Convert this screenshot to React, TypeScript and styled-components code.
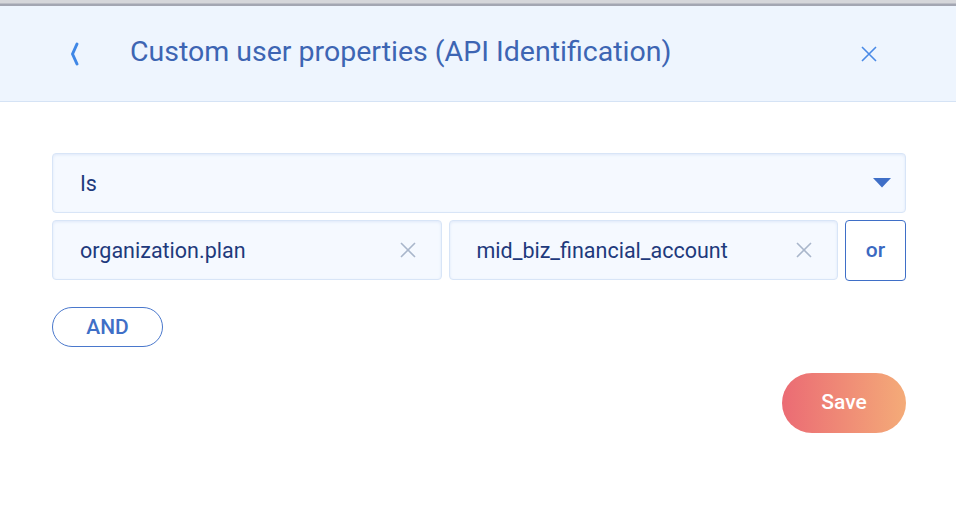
import styled, { createGlobalStyle } from 'styled-components';

const GlobalStyle = createGlobalStyle`
  html, body {
    margin: 0;
    padding: 0;
    background: #ffffff;
    font-family: Roboto, 'Liberation Sans', sans-serif;
  }
  * {
    box-sizing: border-box;
  }
`;

const Panel = styled.div`
  width: 956px;
  height: 528px;
  background: #fff;
  display: flex;
  flex-direction: column;
`;

const TopStrip = styled.div`
  height: 6px;
  flex-shrink: 0;
  background: linear-gradient(to bottom, #d5d6da 0, #d5d6da 3px, #a3a6b2 4px, #a3a6b2 6px);
`;

const Header = styled.div`
  height: 96px;
  flex-shrink: 0;
  background: #eef5fe;
  border-bottom: 1px solid #d5e3f5;
  display: flex;
  align-items: center;
  padding: 0 79px 0 68px;

  h1 {
    flex: 1;
    margin: 0 0 0 48px;
    font-size: 28.5px;
    font-weight: 400;
    color: #3d65b3;
    line-height: 1;
    padding-bottom: 2px;
  }
`;

const IconButton = styled.button`
  border: 0;
  background: none;
  padding: 0;
  display: flex;
  align-items: center;
  justify-content: center;
  cursor: pointer;
`;

const Body = styled.div`
  padding: 51px 50px 0 52px;
  display: flex;
  flex-direction: column;
`;

const Field = styled.div<{ $inRow?: boolean }>`
  height: 60px;
  flex: ${({ $inRow }) => ($inRow ? '1' : 'none')};
  background: #f5f9ff;
  border: 1px solid #d8e5f7;
  border-radius: 4px;
  box-shadow: inset 0 1px 3px rgba(120, 160, 220, 0.18);
  display: flex;
  align-items: center;
  padding: 0 ${({ $inRow }) => ($inRow ? '25px' : '14px')} 0 27px;
  font-size: 21.5px;
  color: #1e3a7c;

  span {
    flex: 1;
  }
`;

const Row = styled.div`
  display: flex;
  gap: 7px;
  margin-top: 7px;
`;

const OrButton = styled.button`
  width: 61px;
  height: 61px;
  border: 1px solid #3f6fc7;
  border-radius: 4px;
  background: #fff;
  color: #3a69c1;
  font-family: Roboto, 'Liberation Sans', sans-serif;
  font-size: 21px;
  font-weight: 500;
  padding: 0 0 2px;
`;

const AndButton = styled.button`
  margin-top: 26px;
  align-self: flex-start;
  width: 111px;
  height: 40px;
  border: 1px solid #4a78cc;
  border-radius: 20px;
  background: #fff;
  color: #3f6fc7;
  font-family: Roboto, 'Liberation Sans', sans-serif;
  font-size: 21px;
  font-weight: 500;
  padding: 0 0 1px;
`;

const Footer = styled.div`
  display: flex;
  justify-content: flex-end;
  margin-top: 26px;
`;

const SaveButton = styled.button`
  width: 124px;
  height: 60px;
  border: 0;
  border-radius: 30px;
  background: linear-gradient(to right, #eb6b74, #f4ab78);
  color: #fff;
  font-family: Roboto, 'Liberation Sans', sans-serif;
  font-size: 21px;
  font-weight: 500;
  padding: 0 0 2px;
`;

const Cross = ({ color, size }: { color: string; size: number }) => (
  <svg width={size} height={size} viewBox="0 0 16 16">
    <path d="M1 1 L15 15 M15 1 L1 15" stroke={color} strokeWidth="1.6" fill="none" />
  </svg>
);

export default function App() {
  return (
    <Panel>
      <GlobalStyle />
      <TopStrip />
      <Header>
        <IconButton>
          <svg width="14" height="24" viewBox="0 0 14 24">
            <path d="M9 2 L4.5 12 L9 22" stroke="#3f87e6" strokeWidth="3" fill="none" strokeLinecap="round" strokeLinejoin="round" />
          </svg>
        </IconButton>
        <h1>Custom user properties (API Identification)</h1>
        <IconButton>
          <Cross color="#4a8ae6" size={16} />
        </IconButton>
      </Header>
      <Body>
        <Field>
          <span>Is</span>
          <svg width="18" height="10" viewBox="0 0 18 10">
            <path d="M0 0 H18 L9 9.5 Z" fill="#3f6fc7" />
          </svg>
        </Field>
        <Row>
          <Field $inRow>
            <span>organization.plan</span>
            <Cross color="#a9b6cb" size={16} />
          </Field>
          <Field $inRow>
            <span>mid_biz_financial_account</span>
            <Cross color="#a9b6cb" size={16} />
          </Field>
          <OrButton>or</OrButton>
        </Row>
        <AndButton>AND</AndButton>
        <Footer>
          <SaveButton>Save</SaveButton>
        </Footer>
      </Body>
    </Panel>
  );
}
